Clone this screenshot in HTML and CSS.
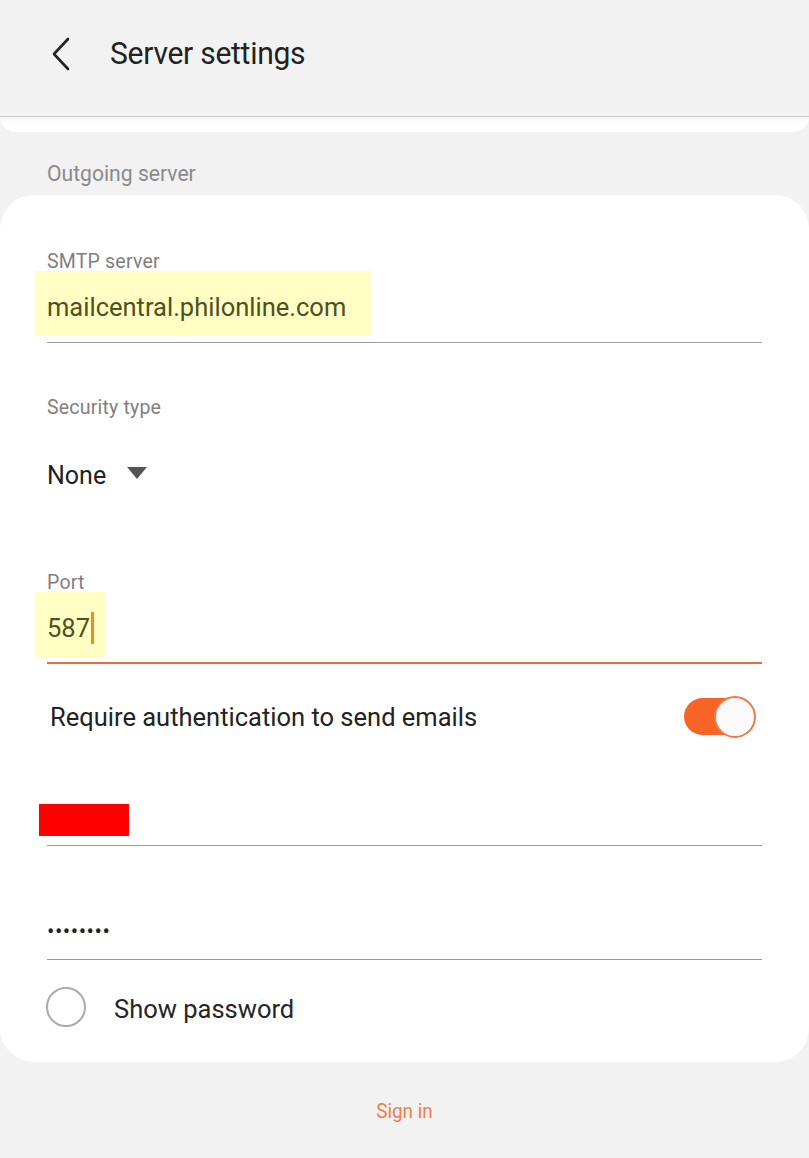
FILE: index.html
```html
<!DOCTYPE html>
<html lang="en">

<head>
    <meta charset="UTF-8">
    <meta name="viewport" content="width=device-width, initial-scale=1.0">
    <title>Server settings</title>
    <link rel="stylesheet" href="styles.css">
</head>

<body>
    <div class="app-bar">
        <svg class="back-icon" width="22" height="34" viewBox="0 0 22 34">
            <path d="M18 2 L4 17 L18 32" fill="none" stroke="#222" stroke-width="2.6" stroke-linecap="round" stroke-linejoin="round"/>
        </svg>
        <div class="app-title">Server settings</div>
    </div>

    <div class="card-stub"></div>

    <div class="section-title">Outgoing server</div>

    <div class="card">
        <div class="label">SMTP server</div>
        <div class="value-row">
            <span class="mark mark-wide">mailcentral.philonline.com</span>
        </div>

        <div class="label label-gap">Security type</div>
        <div class="select-row">
            <span class="select-text">None</span>
            <span class="caret"></span>
        </div>

        <div class="label">Port</div>
        <div class="value-row value-row-active">
            <span class="mark mark-port">587<span class="cursor"></span></span>
        </div>

        <div class="switch-row">
            <span class="switch-text">Require authentication to send emails</span>
            <div class="switch">
                <div class="switch-track"></div>
                <div class="switch-thumb"></div>
            </div>
        </div>

        <div class="user-row">
            <div class="redacted"></div>
        </div>

        <div class="pass-row">
            <span class="dots">••••••••</span>
        </div>

        <div class="check-row">
            <span class="radio"></span>
            <span class="check-text">Show password</span>
        </div>
    </div>

    <div class="sign-in">Sign in</div>
</body>

</html>
```

FILE: styles.css
```css
body, html {
    margin: 0;
    padding: 0;
    background-color: #f2f2f2;
    font-family: Roboto, "Noto Sans", sans-serif;
    color: #222;
}

.app-bar {
    height: 106px;
    padding-bottom: 10px;
    border-bottom: 1px solid #c9c9c9;
    display: flex;
    align-items: center;
    padding-left: 50px;
}

.back-icon {
    margin-top: 2px;
}

.app-title {
    margin-left: 38px;
    font-size: 31px;
    letter-spacing: -0.3px;
    color: #222;
    transform: scaleX(0.97);
    transform-origin: left center;
}

.card-stub {
    height: 15px;
    background: linear-gradient(#f5f5f5, #ffffff 45%);
    border-radius: 0 0 30px 30px;
}

.section-title {
    margin: 31px 0 10px 47px;
    font-size: 22px;
    line-height: 22px;
    color: #8a8a8a;
    transform: scaleX(0.96);
    transform-origin: left center;
}

.card {
    background-color: #ffffff;
    border-radius: 34px;
    padding: 55px 47px 8px 47px;
}

.label {
    padding-top: 2px;
    font-size: 19.5px;
    line-height: 20px;
    letter-spacing: 0.2px;
    color: #7f7f7f;
}

.label-gap {
    margin-top: 53px;
}

.value-row {
    height: 71px;
    border-bottom: 1px solid #9c9c9c;
    margin-top: -1px;
}

.value-row-active {
    height: 70px;
    border-bottom: 2px solid #ee6a3c;
}

.mark {
    display: inline-block;
    height: 65px;
    line-height: 72px;
    margin-left: -12px;
    padding-left: 12px;
    background-color: #ffffc4;
    color: #50501e;
    font-size: 25.5px;
}

.mark-wide {
    width: 324px;
}

.mark-port {
    width: 58px;
}

.cursor {
    display: inline-block;
    width: 3px;
    height: 32px;
    margin-left: 1px;
    background-color: #ec8a2a;
    vertical-align: -7px;
}

.select-row {
    display: flex;
    align-items: center;
    height: 36px;
    margin: 39px 0 78px 0;
}

.select-text {
    font-size: 25px;
}

.caret {
    margin-left: 21px;
    margin-top: -4px;
    width: 0;
    height: 0;
    border-left: 10px solid transparent;
    border-right: 10px solid transparent;
    border-top: 12px solid #555;
}

.switch-row {
    display: flex;
    align-items: center;
    justify-content: space-between;
    height: 106px;
    padding-left: 3px;
}

.switch-text {
    font-size: 25.5px;
}

.switch {
    position: relative;
    width: 72px;
    height: 42px;
    margin-right: 6px;
}

.switch-track {
    width: 60px;
    height: 37px;
    margin-top: 2px;
    border-radius: 19px;
    background-color: #f66426;
}

.switch-thumb {
    position: absolute;
    top: 0;
    right: 0;
    width: 38px;
    height: 38px;
    border: 2px solid #f07a48;
    border-radius: 50%;
    background-color: #fafafa;
}

.user-row {
    display: flex;
    align-items: flex-end;
    height: 66px;
    padding-bottom: 9px;
    border-bottom: 1px solid #9c9c9c;
}

.redacted {
    width: 90px;
    height: 32px;
    margin-left: -8px;
    background-color: #ff0000;
}

.pass-row {
    display: flex;
    align-items: flex-end;
    height: 104px;
    padding-bottom: 9px;
    border-bottom: 1px solid #9c9c9c;
}

.dots {
    font-size: 22px;
    line-height: 36px;
    letter-spacing: 0.5px;
    color: #222;
}

.check-row {
    display: flex;
    align-items: center;
    height: 94px;
}

.radio {
    width: 36px;
    height: 36px;
    margin-left: -1px;
    border: 2px solid #ababab;
    border-radius: 50%;
}

.check-text {
    margin-left: 28px;
    margin-top: 4px;
    font-size: 25.5px;
    color: #262626;
}

.sign-in {
    margin-top: 38px;
    text-align: center;
    font-size: 21px;
    line-height: 22px;
    color: #f07e4c;
    transform: scaleX(0.9);
}
```
